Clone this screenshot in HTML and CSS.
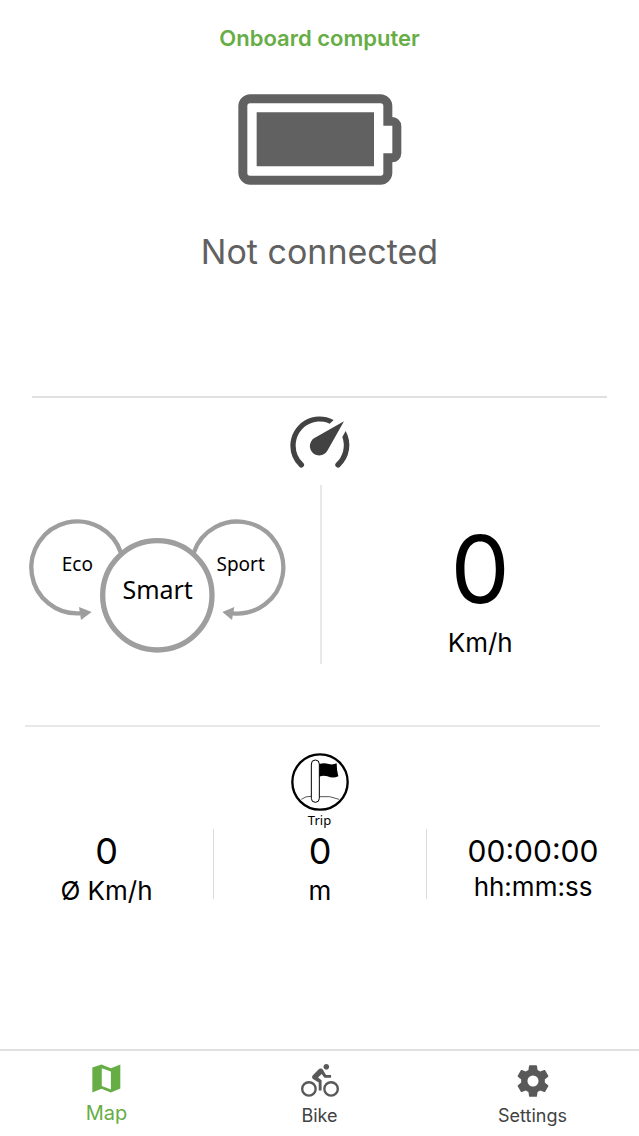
FILE: index.html
```html
<!DOCTYPE html>
<html lang="en">

<head>
    <meta charset="UTF-8">
    <meta name="viewport" content="width=device-width, initial-scale=1.0">
    <title>Onboard computer</title>
    <link rel="stylesheet" href="styles.css">
</head>

<body>
    <header class="header">
        <h1>Onboard computer</h1>
    </header>

    <main class="content">
        <!-- Battery status -->
        <section class="battery">
            <svg class="battery-icon" viewBox="144 251 492 273" aria-hidden="true">
                <path fill-rule="evenodd" d="M181 252H571a36 36 0 0 1 36 36V320a27 27 0 0 1 27 27V429a27 27 0 0 1-27 27V487a36 36 0 0 1-36 36H181a36 36 0 0 1-36-36V288a36 36 0 0 1 36-36ZM180 279a8 8 0 0 0-8 8V488a8 8 0 0 0 8 8H572a8 8 0 0 0 8-8V429H607V346H580V287a8 8 0 0 0-8-8Z"/>
                <path d="M200 306H552V468H200Z"/>
            </svg>
            <p class="battery-status">Not connected</p>
        </section>

        <hr class="divider">

        <!-- Ride mode and speed -->
        <section class="ride">
            <svg class="gauge-icon" viewBox="60 93 180 159" aria-hidden="true">
                <path d="M191 105A88 88 0 0 0 61 182A88 88 0 0 0 88 245A8 8 0 0 0 100 234A72 72 0 0 1 77 182A72 72 0 0 1 179 116Z"/>
                <path d="M227 138A88 88 0 0 1 210 245A8 8 0 0 1 198 234A72 72 0 0 0 217 156Z"/>
                <path d="M222 109L172 197A28 28 0 1 1 132 160Z"/>
            </svg>
            <div class="ride-row">
                <div class="ride-modes">
                    <svg class="modes" viewBox="42 55 768 402" role="img" aria-label="Ride modes">
                        <g class="mode-ring">
                            <path d="M318 157A138 138 0 1 0 196 338"/>
                            <path d="M536 157A138 138 0 1 1 653 338"/>
                            <circle class="mode-active" cx="427" cy="284" r="164"/>
                        </g>
                        <path class="mode-arrow" d="M192 319L230 334L198 358ZM658 319L622 334L651 358Z"/>
                        <text class="mode-label" x="187" y="212">Eco</text>
                        <text class="mode-label" x="677" y="212">Sport</text>
                        <text class="mode-label mode-label-active" x="428" y="294">Smart</text>
                    </svg>
                </div>
                <div class="speed">
                    <span class="speed-value">0</span>
                    <span class="unit">Km/h</span>
                </div>
            </div>
        </section>

        <hr class="divider divider-trip">

        <!-- Trip values -->
        <section class="trip">
            <svg class="trip-icon" viewBox="64 39 174 174" aria-hidden="true">
                <circle class="trip-ring" cx="151" cy="126" r="83"/>
                <path class="trip-line" d="M95 178Q108 168 124 169M150 170Q181 166 208 178"/>
                <rect class="trip-pole" x="125" y="60" width="24" height="127" rx="12"/>
                <path d="M149 72Q163 67 177 72Q190 75 201 70Q201 92 206 109Q190 116 173 109Q160 105 149 110Z"/>
            </svg>
            <h2 class="trip-title">Trip</h2>
            <div class="trip-row">
                <div class="trip-cell">
                    <span class="trip-value">0</span>
                    <span class="unit">Ø Km/h</span>
                </div>
                <div class="trip-cell">
                    <span class="trip-value">0</span>
                    <span class="unit">m</span>
                </div>
                <div class="trip-cell trip-time">
                    <span class="trip-value">00:00:00</span>
                    <span class="unit">hh:mm:ss</span>
                </div>
            </div>
        </section>
    </main>

    <!-- Tab bar -->
    <nav class="tabs">
        <a class="tab tab-active" href="#map">
            <svg class="map-icon" viewBox="38 26 86 85" aria-hidden="true">
                <path fill-rule="evenodd" d="M39 36L66 27L94 38L122 27V98L94 110L66 99L39 110ZM67 38V91L94 101V48Z"/>
            </svg>
            <span>Map</span>
        </a>
        <a class="tab" href="#bike">
            <svg class="tab-icon" viewBox="0 0 24 24" aria-hidden="true">
                <path d="M5,20.5A3.5,3.5 0 0,1 1.5,17A3.5,3.5 0 0,1 5,13.5A3.5,3.5 0 0,1 8.5,17A3.5,3.5 0 0,1 5,20.5M5,12A5,5 0 0,0 0,17A5,5 0 0,0 5,22A5,5 0 0,0 10,17A5,5 0 0,0 5,12M14.8,10H19V8.2H15.8L13.86,4.93C13.57,4.43 13,4.1 12.4,4.1C11.93,4.1 11.5,4.29 11.2,4.6L7.5,8.29C7.19,8.6 7,9 7,9.5C7,10.13 7.33,10.66 7.85,10.97L11.2,13V18H13V11.5L10.75,9.85L13.07,7.5M19,20.5A3.5,3.5 0 0,1 15.5,17A3.5,3.5 0 0,1 19,13.5A3.5,3.5 0 0,1 22.5,17A3.5,3.5 0 0,1 19,20.5M19,12A5,5 0 0,0 14,17A5,5 0 0,0 19,22A5,5 0 0,0 24,17A5,5 0 0,0 19,12M16,4.8C17,4.8 17.8,4 17.8,3C17.8,2 17,1.2 16,1.2C15,1.2 14.2,2 14.2,3C14.2,4 15,4.8 16,4.8Z"/>
            </svg>
            <span>Bike</span>
        </a>
        <a class="tab" href="#settings">
            <svg class="tab-icon" viewBox="0 0 24 24" aria-hidden="true">
                <path d="M12,15.5A3.5,3.5 0 0,1 8.5,12A3.5,3.5 0 0,1 12,8.5A3.5,3.5 0 0,1 15.5,12A3.5,3.5 0 0,1 12,15.5M19.43,12.97C19.47,12.65 19.5,12.33 19.5,12C19.5,11.67 19.47,11.34 19.43,11L21.54,9.37C21.73,9.22 21.78,8.95 21.66,8.73L19.66,5.27C19.54,5.05 19.27,4.96 19.05,5.05L16.56,6.05C16.04,5.66 15.5,5.32 14.87,5.07L14.5,2.42C14.46,2.18 14.25,2 14,2H10C9.75,2 9.54,2.18 9.5,2.42L9.13,5.07C8.5,5.32 7.96,5.66 7.44,6.05L4.95,5.05C4.73,4.96 4.46,5.05 4.34,5.27L2.34,8.73C2.21,8.95 2.27,9.22 2.46,9.37L4.57,11C4.53,11.34 4.5,11.67 4.5,12C4.5,12.33 4.53,12.65 4.57,12.97L2.46,14.63C2.27,14.78 2.21,15.05 2.34,15.27L4.34,18.73C4.46,18.95 4.73,19.03 4.95,18.95L7.44,17.94C7.96,18.34 8.5,18.68 9.13,18.93L9.5,21.58C9.54,21.82 9.75,22 10,22H14C14.25,22 14.46,21.82 14.5,21.58L14.87,18.93C15.5,18.67 16.04,18.34 16.56,17.94L19.05,18.95C19.27,19.03 19.54,18.95 19.66,18.73L21.66,15.27C21.78,15.05 21.73,14.78 21.54,14.63L19.43,12.97Z"/>
            </svg>
            <span>Settings</span>
        </a>
    </nav>
</body>

</html>
```

FILE: styles.css
```css
* {
    box-sizing: border-box;
}

body {
    font-family: Inter, "Liberation Sans", sans-serif;
    background-color: white;
    color: black;
    margin: 0;
    min-height: 100vh;
    display: flex;
    flex-direction: column;
}

svg {
    display: block;
    overflow: visible;
}

/* Header */
.header {
    padding: 24px 16px;
    text-align: center;
}

h1 {
    margin: 0;
    font-size: 22px;
    line-height: 28px;
    font-weight: 600;
    color: #67ad45;
}

.content {
    flex: 1;
}

/* Lines between the sections */
.divider {
    height: 2px;
    margin: 0 32px;
    border: none;
    background-color: #e0e0e0;
}

.divider-trip {
    margin: 0 39px 0 25px;
    background-color: #e8e8e8;
}

/* Battery status */
.battery {
    display: flex;
    flex-direction: column;
    align-items: center;
    gap: 45px;
    padding: 18px 0 122px;
}

.battery-icon {
    width: 164px;
    height: 91px;
    fill: #616161;
}

.battery-status {
    margin: 0;
    font-size: 34px;
    line-height: 44px;
    color: #616161;
}

/* Ride mode and speed */
.ride {
    padding: 18px 0 61px;
}

.gauge-icon {
    width: 60px;
    height: 53px;
    margin: 0 auto 16px;
    fill: #424242;
}

.ride-row {
    display: grid;
    grid-template-columns: 1fr 1fr;
}

.ride-modes {
    padding: 34px 0 0 29px;
}

.speed {
    display: flex;
    flex-direction: column;
    align-items: center;
    padding: 28px 0 3px;
    border-left: 2px solid #e8e8e8;
}

.modes {
    width: 256px;
    height: 134px;
}

.mode-ring {
    fill: none;
    stroke: #9e9e9e;
    stroke-width: 13;
}

.mode-active {
    fill: white;
    stroke-width: 16;
}

.mode-arrow {
    fill: #9e9e9e;
}

.mode-label {
    font-family: "Noto Sans", sans-serif;
    font-size: 57px;
    text-anchor: middle;
}

.mode-label-active {
    font-size: 75px;
}

.speed-value {
    font-size: 94px;
    line-height: 112px;
}

.unit {
    font-size: 26px;
    line-height: 36px;
}

/* Trip values */
.trip {
    padding-top: 26px;
}

.trip-icon {
    width: 58px;
    height: 58px;
    margin: 0 auto;
}

.trip-ring {
    fill: none;
    stroke: black;
    stroke-width: 7;
}

.trip-line {
    fill: none;
    stroke: black;
    stroke-width: 2;
}

.trip-pole {
    fill: white;
    stroke: black;
    stroke-width: 3;
}

.trip-title {
    margin: 0;
    font-family: "Noto Sans", sans-serif;
    font-size: 13px;
    line-height: 18px;
    font-weight: 400;
    text-align: center;
}

.trip-row {
    display: grid;
    grid-template-columns: repeat(3, 1fr);
}

.trip-cell {
    display: flex;
    flex-direction: column;
    align-items: center;
    height: 70px;
}

.trip-cell + .trip-cell {
    border-left: 1px solid #dcdcdc;
}

.trip-value {
    font-size: 36px;
    line-height: 44px;
}

.trip-time .trip-value {
    font-size: 30px;
}

.trip-time .unit {
    line-height: 28px;
}

/* Tab bar */
.tabs {
    display: grid;
    grid-template-columns: repeat(3, 1fr);
    height: 87px;
    border-top: 2px solid #e0e0e0;
}

.tab {
    display: flex;
    flex-direction: column;
    align-items: center;
    padding-top: 11px;
    gap: 4px;
    font-size: 18px;
    line-height: 24px;
    color: #424242;
    text-decoration: none;
}

.tab-active {
    gap: 8px;
    padding-top: 13px;
    font-size: 20px;
    color: #67ad45;
}

.tab-icon {
    width: 38px;
    height: 38px;
    fill: #595959;
}

.map-icon {
    width: 29px;
    height: 29px;
    fill: #67ad45;
}
```
